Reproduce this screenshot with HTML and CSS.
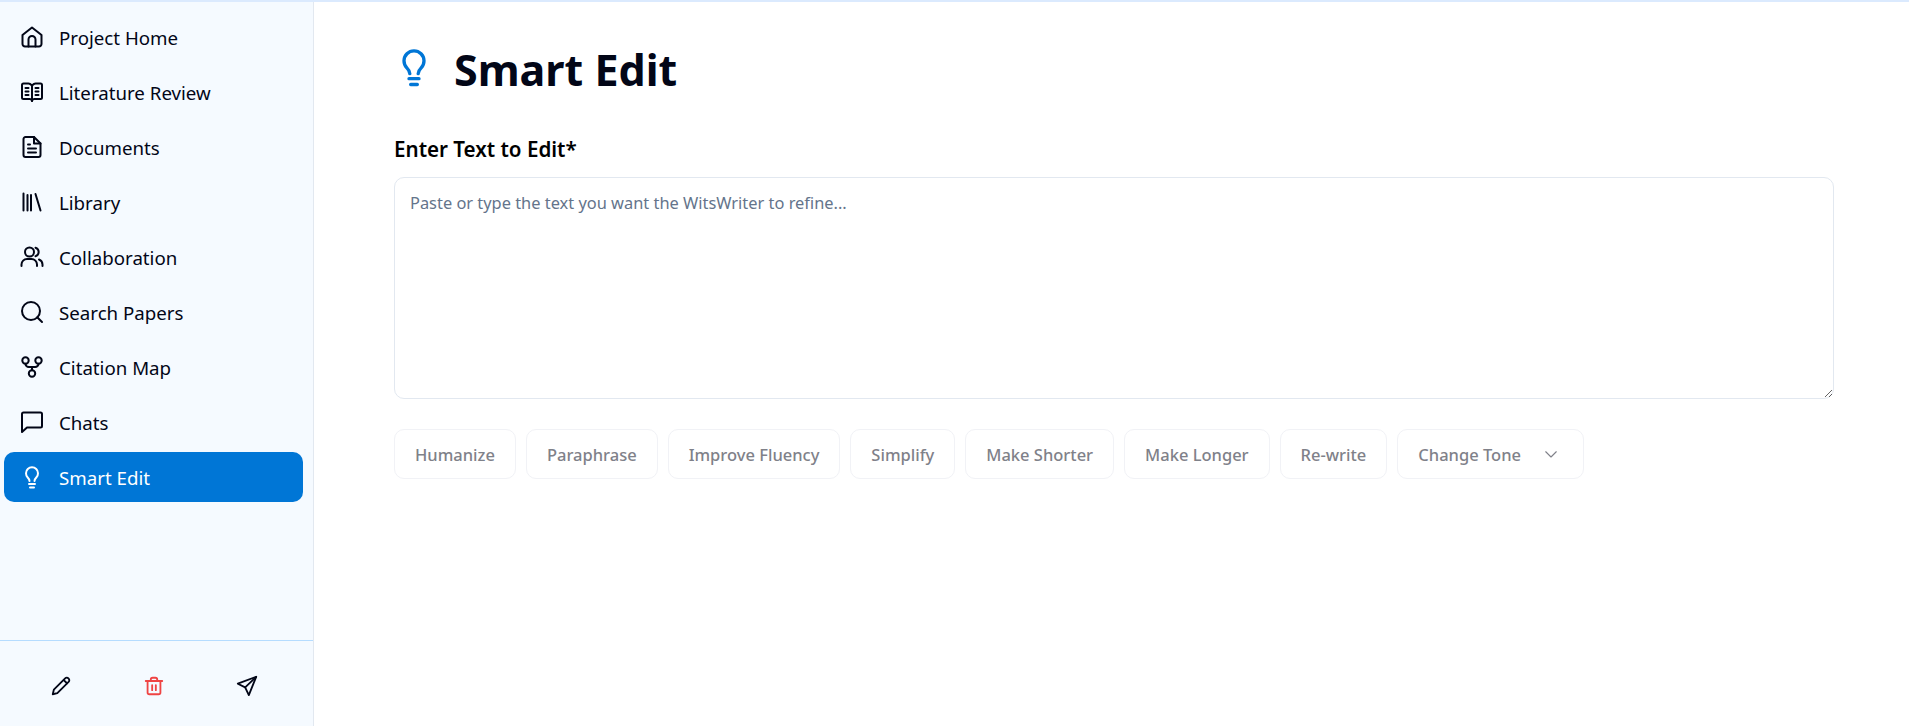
FILE: index.html
```html
<!DOCTYPE html>
<html lang="en">
<head>
<meta charset="utf-8">
<title>Smart Edit</title>
<link rel="stylesheet" href="styles.css">
</head>
<body>
<div class="app">
  <aside class="sidebar">
    <nav class="nav">
      <a class="nav-item"><svg class="icon" viewBox="0 0 24 24"><path d="M2.500 10 12 2.500 21.500 10v9a2.500 2.500 0 0 1-2.500 2.500H5A2.500 2.500 0 0 1 2.500 19z"/><path d="M8.500 21.500v-7a3.500 3.500 0 0 1 7 0v7"/></svg><span>Project Home</span></a>
      <a class="nav-item"><svg class="icon" viewBox="0 0 24 24"><path d="M12 5.500C11 4.500 10 3.500 8.500 3.500H3.500A1.500 1.500 0 0 0 2 5v12.500A1.500 1.500 0 0 0 3.500 19H10c1 0 1.500.5 2 2 .5-1.500 1-2 2-2h6.500a1.500 1.500 0 0 0 1.500-1.500V5a1.500 1.500 0 0 0-1.500-1.500h-5C14 3.500 13 4.500 12 5.500z"/><path d="M12 5.500V21M5.500 8h3M5.500 11.500h3M5.500 15h3M15.500 8h3M15.500 11.500h3M15.500 15h3"/></svg><span>Literature Review</span></a>
      <a class="nav-item"><svg class="icon" viewBox="0 0 24 24"><path d="M14 2H5.500a2 2 0 0 0-2 2v16a2 2 0 0 0 2 2h13a2 2 0 0 0 2-2V8.500z"/><path d="M14 2v6.500h6.500M8 9.500h2M8 13.500h8M8 17.500h8"/></svg><span>Documents</span></a>
      <a class="nav-item"><svg class="icon" viewBox="0 0 24 24"><path d="M3.500 3.500v17M7.500 5v15.500M11 5v15.500M15.500 4l5 16.500"/></svg><span>Library</span></a>
      <a class="nav-item"><svg class="icon" viewBox="0 0 24 24"><path d="M1.500 21v-1.500A5.500 5.500 0 0 1 7 14h4.500a5.500 5.500 0 0 1 5.500 5.500V21"/><circle cx="9.500" cy="7" r="4.500"/><path d="M22.500 21v-1.500a5.500 5.500 0 0 0-3.500-5M15.500 2.700a4.500 4.500 0 0 1 0 8.600"/></svg><span>Collaboration</span></a>
      <a class="nav-item"><svg class="icon" viewBox="0 0 24 24"><circle cx="11" cy="11" r="9"/><path d="m22 22-4.800-4.800"/></svg><span>Search Papers</span></a>
      <a class="nav-item"><svg class="icon" viewBox="0 0 24 24"><circle cx="5.500" cy="5.500" r="3.200"/><circle cx="18.500" cy="5.500" r="3.200"/><circle cx="12" cy="18.500" r="3.200"/><path d="M5.500 8.700a3.300 3.300 0 0 0 3.300 3.300h6.400a3.300 3.300 0 0 0 3.300-3.300M12 12v3.300"/></svg><span>Citation Map</span></a>
      <a class="nav-item"><svg class="icon" viewBox="0 0 24 24"><path d="M22 16a1.500 1.500 0 0 1-1.500 1.500H7L2 22V4a1.500 1.500 0 0 1 1.500-1.500h17A1.500 1.500 0 0 1 22 4z"/></svg><span>Chats</span></a>
      <a class="nav-item active"><svg class="icon" viewBox="0 0 24 24"><path d="M9.500 16c0-1.500-.8-2.500-1.800-3.500A6 6 0 1 1 16.300 12.500c-1 1-1.800 2-1.800 3.500"/><path d="M9 19h6M10 22.500h4"/></svg><span>Smart Edit</span></a>
    </nav>
    <div class="tools">
      <button class="tool"><svg class="tool-icon" viewBox="0 0 24 24"><path d="M3 21l1.200-5L16.500 3.700a2.500 2.500 0 0 1 3.600 0l.2.200a2.500 2.500 0 0 1 0 3.600L8 19.800z"/><path d="m15 5.500 3.500 3.500"/></svg></button>
      <button class="tool danger"><svg class="tool-icon" viewBox="0 0 24 24"><path d="M3 6.500h18M19 6.500V19a2 2 0 0 1-2 2H7a2 2 0 0 1-2-2V6.500M8.500 6.500V5a2 2 0 0 1 2-2h3a2 2 0 0 1 2 2v1.500M10 11v5.500M14 11v5.500"/></svg></button>
      <button class="tool"><svg class="tool-icon" viewBox="0 0 24 24"><path d="M22 2 2 9.500l8 4 4 8.500z"/><path d="M22 2 10 13.500"/></svg></button>
    </div>
  </aside>
  <main class="main">
    <header class="title-row">
      <svg class="title-icon" viewBox="0 0 24 24"><path d="M9.500 16c0-1.500-.8-2.500-1.800-3.500A6 6 0 1 1 16.300 12.500c-1 1-1.800 2-1.800 3.500"/><path d="M9 19h6M10 22.500h4"/></svg>
      <h1 class="title">Smart Edit</h1>
    </header>
    <label class="field-label" for="text">Enter Text to Edit*</label>
    <textarea class="editor" id="text" placeholder="Paste or type the text you want the WitsWriter to refine..."></textarea>
    <div class="actions">
      <button class="action">Humanize</button>
      <button class="action">Paraphrase</button>
      <button class="action">Improve Fluency</button>
      <button class="action">Simplify</button>
      <button class="action">Make Shorter</button>
      <button class="action">Make Longer</button>
      <button class="action">Re-write</button>
      <button class="action tone">Change Tone<svg class="chevron" viewBox="0 0 24 24"><path d="m5 9 7 7 7-7"/></svg></button>
    </div>
  </main>
</div>
</body>
</html>
```
FILE: styles.css
```css
* { box-sizing: border-box; }
html, body { margin: 0; height: 100%; }
body {
  font-family: "Noto Sans", "Open Sans", sans-serif;
  color: #020617;
  background: #fff;
  overflow: hidden;
}
svg { fill: none; stroke: currentColor; stroke-linecap: round; stroke-linejoin: round; flex: none; }
.app { display: flex; height: 100%; border-top: 2px solid #dbeafe; }
.sidebar {
  width: 314px;
  flex: none;
  display: flex;
  flex-direction: column;
  background: #f5faff;
  border-right: 1px solid #e2e8f0;
}
.nav { flex: 1; display: flex; flex-direction: column; gap: 5px; padding: 10px 10px 0 4px; }
.nav-item {
  height: 50px;
  display: flex;
  align-items: center;
  gap: 15px;
  padding-left: 16px;
  border-radius: 10px;
  font-size: 18.7px;
  color: #020617;
}
.nav-item.active { background: #0076d6; color: #fff; }
.icon { width: 24px; height: 24px; stroke-width: 2; }
.tools {
  height: 86px;
  display: grid;
  grid-template-columns: repeat(3, 93px);
  padding: 4px 0 0 14px;
  align-items: center;
  border-top: 1px solid #b5dcff;
}
.tool { border: 0; background: none; padding: 0; display: flex; justify-content: center; color: #020617; }
.tool.danger { color: #ef4444; }
.tool-icon { width: 22px; height: 22px; stroke-width: 2; }
.main { flex: 1; padding: 0 75px 0 80px; }
.title-row { display: flex; align-items: center; gap: 20px; height: 60px; margin-top: 35px; }
.title-icon { width: 40px; height: 40px; stroke-width: 2; color: #0076d6; }
.title { margin: 5px 0 0; font-size: 43px; font-weight: 700; line-height: 60px; }
.field-label { display: block; margin-top: 37px; font-size: 20.600px; font-weight: 600; line-height: 30px; color: #000; }
.editor {
  display: block;
  width: 100%;
  height: 222px;
  margin-top: 13px;
  padding: 12px 15px;
  border: 1px solid #e2e8f0;
  border-radius: 10px;
  font: inherit;
  font-size: 16.400px;
  line-height: 25px;
  outline: none;
}
.editor::placeholder { color: #64748b; opacity: 1; }
.actions { display: flex; gap: 10px; margin-top: 30px; }
.action {
  height: 50px;
  padding: 0 20px;
  display: flex;
  align-items: center;
  background: #fff;
  border: 1px solid #f1f2f6;
  border-radius: 10px;
  font: inherit;
  font-size: 16.500px;
  font-weight: 500;
  color: #7f8189;
}
.chevron { width: 18px; height: 18px; margin-left: 21px; margin-right: 3px; stroke-width: 1.500; }
```
